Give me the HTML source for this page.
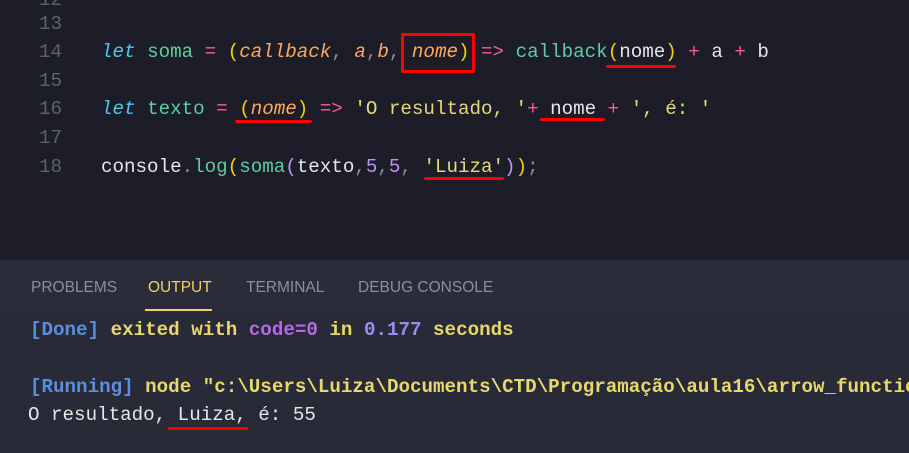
<!DOCTYPE html>
<html><head><meta charset="utf-8"><style>
body{margin:0;width:909px;height:453px;overflow:hidden;background:#1c1d28;font-family:"Liberation Mono",monospace;position:relative;}
.l{position:absolute;white-space:pre;font-size:19.2px;line-height:28px;}
.n{position:absolute;left:36px;width:26px;color:#5e616e;font-size:19.2px;line-height:28px;text-align:right;}
.k{color:#4fc7ee;font-style:italic}
.f{color:#5fcda0}
.o{color:#ff5c8d}
.p{color:#f5d000}
.a{color:#ffa95c;font-style:italic}
.w{color:#e6e6e6}
.s{color:#e8d87a}
.m{color:#bd93f9}
.g{color:#8a8d99}
#panel{position:absolute;left:0;top:260px;width:909px;height:193px;background:#282a37;}
#tabs{position:absolute;left:0;top:260px;width:909px;height:52px;background:#2a2c3a;}
.t{position:absolute;top:279px;font-family:"Liberation Sans",sans-serif;font-size:15.5px;color:#8c8f9b;}
.r{position:absolute;background:#f00;height:3px;border-radius:2px}
.ol{position:absolute;white-space:pre;font-size:19.2px;line-height:28px;font-weight:600;}
#clip{position:absolute;left:0;top:0;width:909px;height:453px;overflow:hidden;}
</style></head><body>
<div id="clip">
<div class="n" style="top:-14px">12</div>
<div class="n" style="top:10px">13</div>
<div class="n" style="top:38px">14</div>
<div class="n" style="top:67px">15</div>
<div class="n" style="top:95px">16</div>
<div class="n" style="top:124px">17</div>
<div class="n" style="top:153px">18</div>
<div class="l" style="left:101px;top:38px"><span class="k">let</span> <span class="f">soma</span> <span class="o">=</span> <span class="p">(</span><span class="a">callback</span><span class="g">,</span> <span class="a">a</span><span class="g">,</span><span class="a">b</span><span class="g">,</span> <span class="a">nome</span><span class="p">)</span> <span class="o">=&gt;</span> <span class="f">callback</span><span class="p">(</span><span class="w">nome</span><span class="p">)</span> <span class="o">+</span> <span class="w">a</span> <span class="o">+</span> <span class="w">b</span></div>
<div class="l" style="left:101px;top:95px"><span class="k">let</span> <span class="f">texto</span> <span class="o">=</span> <span class="p">(</span><span class="a">nome</span><span class="p">)</span> <span class="o">=&gt;</span> <span class="s">'O resultado, '</span><span class="o">+</span> <span class="w">nome</span> <span class="o">+</span> <span class="s">', é: '</span></div>
<div class="l" style="left:101px;top:153px"><span class="w">console</span><span class="g">.</span><span class="f">log</span><span class="p">(</span><span class="f">soma</span><span class="m">(</span><span class="w">texto</span><span class="g">,</span><span class="m">5</span><span class="g">,</span><span class="m">5</span><span class="g">,</span> <span class="s">'Luiza'</span><span class="m">)</span><span class="p">)</span><span class="g">;</span></div>
<div style="position:absolute;left:401px;top:33px;width:68px;height:34px;border:3px solid #f00;border-radius:2px"></div>
<div class="r" style="left:606px;top:65px;width:70px"></div>
<div class="r" style="left:235px;top:120px;width:77px"></div>
<div class="r" style="left:540px;top:118px;width:65px"></div>
<div class="r" style="left:424px;top:177px;width:80px"></div>
<div id="panel"></div>
<div id="tabs"></div>
<div class="t" style="left:31px">PROBLEMS</div>
<div class="t" style="left:148px;color:#f0d264">OUTPUT</div>
<div style="position:absolute;left:145px;top:309px;width:67px;height:2px;background:#f0d264"></div>
<div class="t" style="left:246px">TERMINAL</div>
<div class="t" style="left:358px">DEBUG CONSOLE</div>
<div class="ol" style="left:30px;top:316px"><span style="color:#5a8fe0">[Done]</span> <span style="color:#e8d76a">exited with</span> <span style="color:#b36ae6">code=0</span> <span style="color:#e8d76a">in</span> <span style="color:#9a8cf0">0.177</span> <span style="color:#e8d76a">seconds</span></div>
<div style="position:absolute;left:0;top:373px;width:909px;height:30px;overflow:hidden"><div class="ol" style="left:30px;top:0"><span style="color:#5a8fe0">[Running]</span> <span style="color:#e8d76a">node "c:\Users\Luiza\Documents\CTD\Programação\aula16\arrow_functions.js"</span></div></div>
<div class="ol" style="left:28px;top:401px;color:#e6e6e6;font-weight:normal">O resultado, Luiza, é: 55</div>
<div class="r" style="left:168px;top:427px;width:80px"></div>
</div>
</body></html>
